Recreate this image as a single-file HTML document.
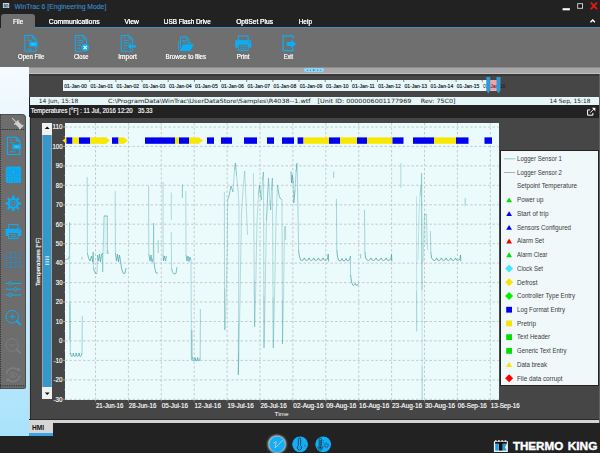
<!DOCTYPE html>
<html><head><meta charset="utf-8">
<style>
*{margin:0;padding:0;box-sizing:border-box}
html,body{width:600px;height:453px;overflow:hidden;background:#222;font-family:"Liberation Sans",sans-serif;color:#fff}
.a{position:absolute}
</style></head><body>
<!-- title bar -->
<div class="a" style="left:0;top:0;width:600px;height:28px;background:#222"></div>
<!-- menu -->
<div class="a" style="left:1px;top:14px;width:34px;height:14px;background:#6f6f6f;border-radius:3px 3px 0 0"></div>
<div class="a" style="left:35px;top:26.7px;width:565px;height:1.4px;background:#4790bd"></div>
<!-- ribbon -->
<div class="a" style="left:0;top:28px;width:600px;height:39.3px;background:#6f6f6f"></div>
<!-- strip -->
<div class="a" style="left:29px;top:67px;width:571px;height:6px;background:#a8a8a8;border-top:0.6px solid #8c8c8c"></div>
<div class="a" style="left:29px;top:72.6px;width:571px;height:1.2px;background:#c0c0c0"></div>
<div class="a" style="left:304.2px;top:67.9px;width:19.8px;height:4.6px;background:#8dd6f7;border-radius:2.3px"></div>
<!-- left column -->
<div class="a" style="left:0;top:67.3px;width:29.3px;height:368.4px;background:linear-gradient(180deg,#f5fbff 0%,#a9e2fb 100%)"></div>
<!-- timeline area -->
<div class="a" style="left:29.3px;top:73.8px;width:571px;height:23.2px;background:#464646;border-top:2.2px solid #383838"></div>
<div class="a" style="left:63.3px;top:80px;width:434px;height:10.8px;background:#e8f8fa"></div>
<!-- info bar -->
<div class="a" style="left:30px;top:97px;width:569px;height:7.8px;background:#e6f6f8"></div>
<!-- header bar -->
<div class="a" style="left:30px;top:104.8px;width:570px;height:13px;background:#222"></div>
<!-- chart panel -->
<div class="a" style="left:29.2px;top:117.6px;width:571px;height:302.8px;background:#2a2a2a"></div><div class="a" style="left:30.6px;top:117.6px;width:570px;height:301.7px;background:#464646"></div>
<div class="a" style="left:29.2px;top:420.4px;width:571px;height:2.6px;background:#d4d4d4"></div>
<div class="a" id="plot" style="left:64.8px;top:123px;width:433.8px;height:276.7px;background:#ebfafb"></div>
<!-- scrollbar -->
<div class="a" style="left:42.4px;top:123px;width:9.8px;height:276.2px;background:#3399cc;border-left:0.7px solid #a0a0a0;border-right:0.7px solid #a0a0a0"></div>
<div class="a" style="left:42.1px;top:123px;width:10.3px;height:11.7px;background:#f0f0f0"></div>
<div class="a" style="left:42.1px;top:387.2px;width:10.3px;height:12px;background:#f0f0f0"></div>
<div class="a" style="left:598.9px;top:73.8px;width:1.1px;height:349px;background:#606060"></div>
<svg class="a" style="left:0;top:0" width="600" height="453" viewBox="0 0 600 453">
<path d="M65 127.0H498.6M65 146.4H498.6M65 165.9H498.6M65 185.3H498.6M65 204.8H498.6M65 224.2H498.6M65 243.7H498.6M65 263.1H498.6M65 282.6H498.6M65 302.0H498.6M65 321.5H498.6M65 340.9H498.6M65 360.4H498.6M65 379.9H498.6M65 399.3H498.6M95.5 123V399.6M128.4 123V399.6M161.3 123V399.6M194.2 123V399.6M227.1 123V399.6M260.0 123V399.6M292.9 123V399.6M325.8 123V399.6M358.7 123V399.6M391.6 123V399.6M424.5 123V399.6M457.4 123V399.6M490.3 123V399.6" stroke="#b8bcbc" stroke-width="0.75" stroke-dasharray="2.5 2" fill="none"/>
<path d="M63 127.0H65M63 146.4H65M63 165.9H65M63 185.3H65M63 204.8H65M63 224.2H65M63 243.7H65M63 263.1H65M63 282.6H65M63 302.0H65M63 321.5H65M63 340.9H65M63 360.4H65M63 379.9H65M63 399.3H65M63.8 127.0H64.8M63.8 136.7H64.8M63.8 146.4H64.8M63.8 156.2H64.8M63.8 165.9H64.8M63.8 175.6H64.8M63.8 185.3H64.8M63.8 195.1H64.8M63.8 204.8H64.8M63.8 214.5H64.8M63.8 224.2H64.8M63.8 234.0H64.8M63.8 243.7H64.8M63.8 253.4H64.8M63.8 263.1H64.8M63.8 272.9H64.8M63.8 282.6H64.8M63.8 292.3H64.8M63.8 302.0H64.8M63.8 311.8H64.8M63.8 321.5H64.8M63.8 331.2H64.8M63.8 340.9H64.8M63.8 350.7H64.8M63.8 360.4H64.8M63.8 370.1H64.8M63.8 379.9H64.8M63.8 389.6H64.8M95.5 399.6V401.5M128.4 399.6V401.5M161.3 399.6V401.5M194.2 399.6V401.5M227.1 399.6V401.5M260.0 399.6V401.5M292.9 399.6V401.5M325.8 399.6V401.5M358.7 399.6V401.5M391.6 399.6V401.5M424.5 399.6V401.5M457.4 399.6V401.5M490.3 399.6V401.5" stroke="#ccc" stroke-opacity="0.7" stroke-width="0.7" fill="none"/>
<path d="M65.0 259.5 L68.5 259.0 L69.3 256.0" stroke="#4aa5aa" stroke-opacity="0.66" stroke-width="0.9" fill="none" stroke-linejoin="round"/>
<path d="M69.3 256.0 L69.6 222.0 L69.9 340.0" stroke="#4aa5aa" stroke-opacity="0.39" stroke-width="0.9" fill="none" stroke-linejoin="round"/>
<path d="M69.8 304.6 L69.9 340.0" stroke="#4aa5aa" stroke-opacity="0.30" stroke-width="0.9" fill="none" stroke-linejoin="round"/>
<path d="M70.0 302.0 L70.3 354.0" stroke="#4aa5aa" stroke-opacity="0.50" stroke-width="0.9" fill="none" stroke-linejoin="round"/>
<path d="M70.3 354.0 L70.5 353.0 L71.2 356.2 L71.9 356.5 L72.8 355.7 L73.4 353.0 L74.1 356.2 L74.8 356.5 L75.7 355.7 L76.2 353.0 L77.0 356.2 L77.7 356.5 L78.5 355.7 L79.1 353.0 L79.8 356.2 L80.6 356.5 L81.4 355.7 L82.0 353.0" stroke="#4aa5aa" stroke-opacity="0.85" stroke-width="0.9" fill="none" stroke-linejoin="round"/>
<path d="M82.0 353.0 L82.3 316.0" stroke="#4aa5aa" stroke-opacity="0.50" stroke-width="0.9" fill="none" stroke-linejoin="round"/>
<path d="M82.0 257.0 L82.0 259.5" stroke="#4aa5aa" stroke-opacity="0.57" stroke-width="0.9" fill="none" stroke-linejoin="round"/>
<path d="M87.2 177.0 L87.4 253.0" stroke="#4aa5aa" stroke-opacity="0.47" stroke-width="0.9" fill="none" stroke-linejoin="round"/>
<path d="M87.4 253.0 L88.5 258.0 L90.0 261.0 L91.5 256.0 L92.8 262.0 L93.2 252.0" stroke="#4aa5aa" stroke-opacity="0.81" stroke-width="0.9" fill="none" stroke-linejoin="round"/>
<path d="M93.2 252.0 L93.5 268.0" stroke="#4aa5aa" stroke-opacity="0.47" stroke-width="0.9" fill="none" stroke-linejoin="round"/>
<path d="M93.5 268.0 L94.5 272.0 L96.0 274.0 L97.0 273.0" stroke="#4aa5aa" stroke-opacity="0.81" stroke-width="0.9" fill="none" stroke-linejoin="round"/>
<path d="M97.0 273.0 L97.5 255.0" stroke="#4aa5aa" stroke-opacity="0.47" stroke-width="0.9" fill="none" stroke-linejoin="round"/>
<path d="M97.5 255.0 L98.5 261.0 L99.5 254.0 L100.5 262.0 L101.5 255.0 L102.4 253.0" stroke="#4aa5aa" stroke-opacity="0.81" stroke-width="0.9" fill="none" stroke-linejoin="round"/>
<path d="M102.4 253.0 L102.7 272.0 L103.0 255.0 L104.0 216.0" stroke="#4aa5aa" stroke-opacity="0.47" stroke-width="0.9" fill="none" stroke-linejoin="round"/>
<path d="M104.0 216.0 L107.4 216.0" stroke="#4aa5aa" stroke-opacity="0.81" stroke-width="0.9" fill="none" stroke-linejoin="round"/>
<path d="M107.4 216.0 L107.6 250.0" stroke="#4aa5aa" stroke-opacity="0.47" stroke-width="0.9" fill="none" stroke-linejoin="round"/>
<path d="M107.6 250.0 L108.0 254.0" stroke="#4aa5aa" stroke-opacity="0.81" stroke-width="0.9" fill="none" stroke-linejoin="round"/>
<path d="M115.2 191.0 L115.4 253.0" stroke="#4aa5aa" stroke-opacity="0.47" stroke-width="0.9" fill="none" stroke-linejoin="round"/>
<path d="M115.4 253.0 L116.5 261.0 L117.5 254.0 L118.5 262.0 L119.5 255.0 L120.7 262.0 L121.5 268.0 L123.0 273.0 L125.0 273.5 L126.0 268.0" stroke="#4aa5aa" stroke-opacity="0.81" stroke-width="0.9" fill="none" stroke-linejoin="round"/>
<path d="M148.6 186.0 L148.8 254.0" stroke="#4aa5aa" stroke-opacity="0.47" stroke-width="0.9" fill="none" stroke-linejoin="round"/>
<path d="M148.8 254.0 L150.0 261.0 L151.0 255.0 L152.0 262.0 L153.3 258.0" stroke="#4aa5aa" stroke-opacity="0.81" stroke-width="0.9" fill="none" stroke-linejoin="round"/>
<path d="M153.3 258.0 L153.6 223.0 L153.9 262.0" stroke="#4aa5aa" stroke-opacity="0.47" stroke-width="0.9" fill="none" stroke-linejoin="round"/>
<path d="M153.9 262.0 L154.8 268.0 L156.0 273.0 L158.0 273.0" stroke="#4aa5aa" stroke-opacity="0.81" stroke-width="0.9" fill="none" stroke-linejoin="round"/>
<path d="M158.2 240.0 L158.2 253.0" stroke="#4aa5aa" stroke-opacity="0.57" stroke-width="0.9" fill="none" stroke-linejoin="round"/>
<path d="M163.0 182.0 L163.1 255.0" stroke="#4aa5aa" stroke-opacity="0.44" stroke-width="0.9" fill="none" stroke-linejoin="round"/>
<path d="M163.1 255.0 L163.5 261.0 L164.5 256.0 L165.5 261.0 L166.5 256.0" stroke="#4aa5aa" stroke-opacity="0.76" stroke-width="0.9" fill="none" stroke-linejoin="round"/>
<path d="M171.3 192.5 L171.3 220.0" stroke="#4aa5aa" stroke-opacity="0.44" stroke-width="0.9" fill="none" stroke-linejoin="round"/>
<path d="M171.3 232.0 L171.5 268.0" stroke="#4aa5aa" stroke-opacity="0.44" stroke-width="0.9" fill="none" stroke-linejoin="round"/>
<path d="M171.5 268.0 L172.5 272.0 L174.0 274.0 L176.0 273.5 L177.0 267.0" stroke="#4aa5aa" stroke-opacity="0.76" stroke-width="0.9" fill="none" stroke-linejoin="round"/>
<path d="M182.4 184.5 L182.4 198.0" stroke="#4aa5aa" stroke-opacity="0.66" stroke-width="0.9" fill="none" stroke-linejoin="round"/>
<path d="M185.8 191.0 L186.0 255.0" stroke="#4aa5aa" stroke-opacity="0.44" stroke-width="0.9" fill="none" stroke-linejoin="round"/>
<path d="M186.0 255.0 L187.0 261.0 L188.0 256.0 L189.0 261.5 L190.0 257.0 L191.0 260.0" stroke="#4aa5aa" stroke-opacity="0.76" stroke-width="0.9" fill="none" stroke-linejoin="round"/>
<path d="M191.0 260.0 L191.4 360.0" stroke="#4aa5aa" stroke-opacity="0.44" stroke-width="0.9" fill="none" stroke-linejoin="round"/>
<path d="M191.3 330.0 L191.4 360.0" stroke="#4aa5aa" stroke-opacity="0.30" stroke-width="0.9" fill="none" stroke-linejoin="round"/>
<path d="M192.0 330.0 L192.2 358.0" stroke="#4aa5aa" stroke-opacity="0.50" stroke-width="0.9" fill="none" stroke-linejoin="round"/>
<path d="M192.2 358.0 L192.5 357.5 L193.1 360.7 L193.8 361.0 L194.6 360.2 L195.1 357.5 L195.7 360.7 L196.3 361.0 L197.1 360.2 L197.6 357.5 L198.3 360.7 L198.9 361.0 L199.7 360.2 L200.2 357.5" stroke="#4aa5aa" stroke-opacity="0.85" stroke-width="0.9" fill="none" stroke-linejoin="round"/>
<path d="M200.2 357.5 L200.4 309.0" stroke="#4aa5aa" stroke-opacity="0.50" stroke-width="0.9" fill="none" stroke-linejoin="round"/>
<path d="M224.4 192.0 L224.6 330.0" stroke="#4aa5aa" stroke-opacity="0.44" stroke-width="0.9" fill="none" stroke-linejoin="round"/>
<path d="M224.5 288.6 L224.6 330.0" stroke="#4aa5aa" stroke-opacity="0.30" stroke-width="0.9" fill="none" stroke-linejoin="round"/>
<path d="M225.2 330.0 L226.0 300.0 L227.4 246.0 L227.6 200.0" stroke="#4aa5aa" stroke-opacity="0.41" stroke-width="0.9" fill="none" stroke-linejoin="round"/>
<path d="M227.6 200.0 L229.0 196.0 L231.0 186.0 L233.0 192.0" stroke="#4aa5aa" stroke-opacity="0.71" stroke-width="0.9" fill="none" stroke-linejoin="round"/>
<path d="M233.0 192.0 L234.5 170.0" stroke="#4aa5aa" stroke-opacity="0.41" stroke-width="0.9" fill="none" stroke-linejoin="round"/>
<path d="M234.5 170.0 L235.4 163.0 L236.5 175.0" stroke="#4aa5aa" stroke-opacity="0.71" stroke-width="0.9" fill="none" stroke-linejoin="round"/>
<path d="M236.5 175.0 L238.0 190.0 L239.0 205.0 L238.3 374.8 L240.0 300.0 L241.5 213.0 L243.0 190.0 L244.7 171.0 L246.0 200.0 L247.5 235.0" stroke="#4aa5aa" stroke-opacity="0.41" stroke-width="0.9" fill="none" stroke-linejoin="round"/>
<path d="M238.5 323.9 L238.3 374.8" stroke="#4aa5aa" stroke-opacity="0.30" stroke-width="0.9" fill="none" stroke-linejoin="round"/>
<path d="M238.8 352.4 L238.3 374.8" stroke="#4aa5aa" stroke-opacity="0.30" stroke-width="0.9" fill="none" stroke-linejoin="round"/>
<path d="M253.4 173.0 L254.6 327.0 L255.5 300.0 L257.0 221.0 L258.5 195.0" stroke="#4aa5aa" stroke-opacity="0.41" stroke-width="0.9" fill="none" stroke-linejoin="round"/>
<path d="M258.5 195.0 L259.5 185.0 L261.4 200.0" stroke="#4aa5aa" stroke-opacity="0.71" stroke-width="0.9" fill="none" stroke-linejoin="round"/>
<path d="M261.4 200.0 L262.5 180.0" stroke="#4aa5aa" stroke-opacity="0.41" stroke-width="0.9" fill="none" stroke-linejoin="round"/>
<path d="M262.5 180.0 L263.5 172.0" stroke="#4aa5aa" stroke-opacity="0.71" stroke-width="0.9" fill="none" stroke-linejoin="round"/>
<path d="M263.5 172.0 L264.0 348.0 L265.0 300.0 L266.5 220.0" stroke="#4aa5aa" stroke-opacity="0.41" stroke-width="0.9" fill="none" stroke-linejoin="round"/>
<path d="M266.5 220.0 L268.5 178.0" stroke="#4aa5aa" stroke-opacity="0.71" stroke-width="0.9" fill="none" stroke-linejoin="round"/>
<path d="M268.5 178.0 L270.0 200.0" stroke="#4aa5aa" stroke-opacity="0.41" stroke-width="0.9" fill="none" stroke-linejoin="round"/>
<path d="M270.0 200.0 L270.7 210.0" stroke="#4aa5aa" stroke-opacity="0.71" stroke-width="0.9" fill="none" stroke-linejoin="round"/>
<path d="M270.7 210.0 L271.6 190.0" stroke="#4aa5aa" stroke-opacity="0.41" stroke-width="0.9" fill="none" stroke-linejoin="round"/>
<path d="M271.6 190.0 L272.4 178.0" stroke="#4aa5aa" stroke-opacity="0.71" stroke-width="0.9" fill="none" stroke-linejoin="round"/>
<path d="M272.4 178.0 L273.3 348.0 L274.5 300.0 L276.0 220.0 L277.5 185.0" stroke="#4aa5aa" stroke-opacity="0.41" stroke-width="0.9" fill="none" stroke-linejoin="round"/>
<path d="M277.5 185.0 L279.0 195.0 L280.0 198.0 L282.0 200.0" stroke="#4aa5aa" stroke-opacity="0.71" stroke-width="0.9" fill="none" stroke-linejoin="round"/>
<path d="M282.0 200.0 L282.5 344.0 L283.5 300.0 L284.5 226.0" stroke="#4aa5aa" stroke-opacity="0.41" stroke-width="0.9" fill="none" stroke-linejoin="round"/>
<path d="M254.2 280.8 L254.6 327.0" stroke="#4aa5aa" stroke-opacity="0.30" stroke-width="0.9" fill="none" stroke-linejoin="round"/>
<path d="M263.9 295.2 L264.0 348.0" stroke="#4aa5aa" stroke-opacity="0.30" stroke-width="0.9" fill="none" stroke-linejoin="round"/>
<path d="M273.0 297.0 L273.3 348.0" stroke="#4aa5aa" stroke-opacity="0.30" stroke-width="0.9" fill="none" stroke-linejoin="round"/>
<path d="M282.4 300.8 L282.5 344.0" stroke="#4aa5aa" stroke-opacity="0.30" stroke-width="0.9" fill="none" stroke-linejoin="round"/>
<path d="M285.5 226.0 L285.7 240.0" stroke="#4aa5aa" stroke-opacity="0.47" stroke-width="0.9" fill="none" stroke-linejoin="round"/>
<path d="M291.0 171.5 L291.5 183.0 L292.3 175.0 L293.2 183.0" stroke="#4aa5aa" stroke-opacity="0.85" stroke-width="0.9" fill="none" stroke-linejoin="round"/>
<path d="M293.2 183.0 L293.8 203.0" stroke="#4aa5aa" stroke-opacity="0.50" stroke-width="0.9" fill="none" stroke-linejoin="round"/>
<path d="M293.8 203.0 L295.0 190.0" stroke="#4aa5aa" stroke-opacity="0.85" stroke-width="0.9" fill="none" stroke-linejoin="round"/>
<path d="M295.0 190.0 L296.0 172.0" stroke="#4aa5aa" stroke-opacity="0.50" stroke-width="0.9" fill="none" stroke-linejoin="round"/>
<path d="M296.0 172.0 L297.0 163.3" stroke="#4aa5aa" stroke-opacity="0.85" stroke-width="0.9" fill="none" stroke-linejoin="round"/>
<path d="M297.0 163.3 L297.8 200.0 L298.6 250.0" stroke="#4aa5aa" stroke-opacity="0.50" stroke-width="0.9" fill="none" stroke-linejoin="round"/>
<path d="M298.6 250.0 L299.3 256.0 L300.8 260.2 L302.0 260.5 L303.4 259.7 L304.3 257.9 L305.5 260.2 L306.7 260.5 L308.1 259.7 L309.0 257.9 L310.2 260.2 L311.4 260.5 L312.8 259.7 L313.7 257.9 L314.9 260.2 L316.1 260.5 L317.5 259.7 L318.4 257.9 L319.6 260.2 L320.8 260.5 L322.2 259.7 L323.1 257.9 L324.3 260.2 L325.5 260.5 L326.9 259.7 L327.8 257.9 L328.2 254.0 L328.6 261.5" stroke="#4aa5aa" stroke-opacity="0.85" stroke-width="0.9" fill="none" stroke-linejoin="round"/>
<path d="M333.7 171.5 L333.7 178.0" stroke="#4aa5aa" stroke-opacity="0.57" stroke-width="0.9" fill="none" stroke-linejoin="round"/>
<path d="M336.4 199.0 L336.8 250.0" stroke="#4aa5aa" stroke-opacity="0.50" stroke-width="0.9" fill="none" stroke-linejoin="round"/>
<path d="M336.8 250.0 L337.6 257.0 L339.0 260.7 L340.0 261.0 L341.2 260.2 L342.0 258.4 L343.0 260.7 L344.0 261.0 L345.2 260.2 L346.0 258.4 L347.0 260.7 L348.0 261.0 L349.2 260.2 L350.0 258.4 L350.3 256.0" stroke="#4aa5aa" stroke-opacity="0.85" stroke-width="0.9" fill="none" stroke-linejoin="round"/>
<path d="M350.3 256.0 L350.6 275.0" stroke="#4aa5aa" stroke-opacity="0.50" stroke-width="0.9" fill="none" stroke-linejoin="round"/>
<path d="M350.6 275.0 L351.5 282.0 L352.8 285.2 L353.6 285.5 L354.6 284.7 L355.3 283.3 L356.1 285.2 L357.0 285.5 L357.9 284.7 L358.6 283.3" stroke="#4aa5aa" stroke-opacity="0.85" stroke-width="0.9" fill="none" stroke-linejoin="round"/>
<path d="M360.6 254.0 L360.6 258.5" stroke="#4aa5aa" stroke-opacity="0.57" stroke-width="0.9" fill="none" stroke-linejoin="round"/>
<path d="M364.5 209.7 L364.9 252.0" stroke="#4aa5aa" stroke-opacity="0.50" stroke-width="0.9" fill="none" stroke-linejoin="round"/>
<path d="M364.9 252.0 L365.6 258.0 L367.3 260.2 L368.5 260.5 L370.0 259.7 L371.0 257.9 L372.3 260.2 L373.6 260.5 L375.1 259.7 L376.1 257.9 L377.3 260.2 L378.6 260.5 L380.1 259.7 L381.1 257.9 L382.4 260.2 L383.6 260.5 L385.2 259.7 L386.2 257.9 L387.4 260.2 L388.7 260.5 L390.2 259.7 L391.2 257.9 L391.5 254.5 L391.8 261.5" stroke="#4aa5aa" stroke-opacity="0.85" stroke-width="0.9" fill="none" stroke-linejoin="round"/>
<path d="M400.8 163.0 L400.8 188.0" stroke="#4aa5aa" stroke-opacity="0.41" stroke-width="0.9" fill="none" stroke-linejoin="round"/>
<path d="M416.5 196.4 L416.7 331.4" stroke="#4aa5aa" stroke-opacity="0.30" stroke-width="0.9" fill="none" stroke-linejoin="round"/>
<path d="M416.6 290.9 L416.7 331.4" stroke="#4aa5aa" stroke-opacity="0.30" stroke-width="0.9" fill="none" stroke-linejoin="round"/>
<path d="M418.0 260.0 L419.0 215.0 L420.0 196.0" stroke="#4aa5aa" stroke-opacity="0.33" stroke-width="0.9" fill="none" stroke-linejoin="round"/>
<path d="M420.0 196.0 L421.0 185.0" stroke="#4aa5aa" stroke-opacity="0.57" stroke-width="0.9" fill="none" stroke-linejoin="round"/>
<path d="M421.5 173.0 L422.0 290.0" stroke="#4aa5aa" stroke-opacity="0.55" stroke-width="1.2" fill="none" stroke-linejoin="round"/>
<path d="M422.0 290.0 L422.2 399.0" stroke="#4aa5aa" stroke-opacity="0.30" stroke-width="0.9" fill="none" stroke-linejoin="round"/>
<path d="M422.1 366.3 L422.2 399.0" stroke="#4aa5aa" stroke-opacity="0.30" stroke-width="0.9" fill="none" stroke-linejoin="round"/>
<path d="M423.0 262.0 L424.0 230.0 L424.5 214.6" stroke="#4aa5aa" stroke-opacity="0.39" stroke-width="0.9" fill="none" stroke-linejoin="round"/>
<path d="M424.5 214.6 L426.5 214.6" stroke="#4aa5aa" stroke-opacity="0.66" stroke-width="0.9" fill="none" stroke-linejoin="round"/>
<path d="M426.5 214.6 L427.0 235.0 L427.6 250.0" stroke="#4aa5aa" stroke-opacity="0.39" stroke-width="0.9" fill="none" stroke-linejoin="round"/>
<path d="M430.4 231.0 L430.8 252.0" stroke="#4aa5aa" stroke-opacity="0.50" stroke-width="0.9" fill="none" stroke-linejoin="round"/>
<path d="M430.8 252.0 L431.6 258.0 L433.2 260.2 L434.4 260.5 L435.8 259.7 L436.7 257.9 L437.9 260.2 L439.1 260.5 L440.5 259.7 L441.4 257.9 L442.6 260.2 L443.8 260.5 L445.2 259.7 L446.1 257.9 L447.3 260.2 L448.5 260.5 L449.9 259.7 L450.8 257.9 L452.0 260.2 L453.2 260.5 L454.6 259.7 L455.5 257.9 L456.7 260.2 L457.9 260.5 L459.3 259.7 L460.2 257.9 L460.5 255.0 L460.8 261.5" stroke="#4aa5aa" stroke-opacity="0.85" stroke-width="0.9" fill="none" stroke-linejoin="round"/>
<path d="M465.2 198.0 L465.2 205.7" stroke="#4aa5aa" stroke-opacity="0.57" stroke-width="0.9" fill="none" stroke-linejoin="round"/>
<rect x="104" y="216" width="3.5" height="38" fill="#4aa5aa" fill-opacity="0.1"/><rect x="424.5" y="214.6" width="2" height="30" fill="#4aa5aa" fill-opacity="0.1"/>
<rect x="66" y="137.4" width="6.5" height="6.4" fill="#0000f0"/>
<rect x="72.5" y="137.4" width="6.5" height="6.4" fill="#f8e800"/>
<rect x="79" y="137.4" width="11.0" height="6.4" fill="#0000f0"/>
<rect x="90" y="137.4" width="15.0" height="6.4" fill="#f8e800"/>
<rect x="112" y="137.4" width="6.5" height="6.4" fill="#0000f0"/>
<rect x="118.5" y="137.4" width="5.5" height="6.4" fill="#f8e800"/>
<rect x="145" y="137.4" width="30.0" height="6.4" fill="#0000f0"/>
<rect x="175" y="137.4" width="4.0" height="6.4" fill="#f8e800"/>
<rect x="179" y="137.4" width="10.0" height="6.4" fill="#0000f0"/>
<rect x="189" y="137.4" width="10.0" height="6.4" fill="#f8e800"/>
<rect x="207" y="137.4" width="7.0" height="6.4" fill="#0000f0"/>
<rect x="221" y="137.4" width="11.0" height="6.4" fill="#0000f0"/>
<rect x="244" y="137.4" width="13.0" height="6.4" fill="#0000f0"/>
<rect x="267" y="137.4" width="7.0" height="6.4" fill="#0000f0"/>
<rect x="282" y="137.4" width="12.0" height="6.4" fill="#0000f0"/>
<rect x="297.6" y="137.4" width="5.9" height="6.4" fill="#0000f0"/>
<rect x="303.5" y="137.4" width="25.5" height="6.4" fill="#f8e800"/>
<rect x="329" y="137.4" width="11.0" height="6.4" fill="#0000f0"/>
<rect x="340" y="137.4" width="17.0" height="6.4" fill="#f8e800"/>
<rect x="357" y="137.4" width="10.0" height="6.4" fill="#0000f0"/>
<rect x="367" y="137.4" width="25.5" height="6.4" fill="#f8e800"/>
<rect x="392.5" y="137.4" width="11.0" height="6.4" fill="#0000f0"/>
<rect x="413" y="137.4" width="21.0" height="6.4" fill="#0000f0"/>
<rect x="434" y="137.4" width="22.0" height="6.4" fill="#f8e800"/>
<rect x="456" y="137.4" width="12.5" height="6.4" fill="#0000f0"/>
<rect x="484.5" y="137.4" width="7.5" height="6.4" fill="#0000f0"/>
<path d="M66.5 137.4L62.5 140.60000000000002L66.5 143.8Z" fill="#f8e800"/>
<path d="M101.5 137.4L105.5 140.60000000000002L101.5 143.8Z" fill="#f8e800"/>
<path d="M106 137.4L110 140.60000000000002L106 143.8Z" fill="#f8e800"/>
<rect x="101" y="137.4" width="5.5" height="6.4" fill="#f8e800"/>
<path d="M124 137.4L128 140.60000000000002L124 143.8Z" fill="#f8e800"/>
<path d="M199 137.4L203 140.60000000000002L199 143.8Z" fill="#f8e800"/>
</svg>
<!-- sidebar -->
<div class="a" style="left:0;top:114.2px;width:25.9px;height:275px;background:#6d6d6d;border-radius:0 4px 2.5px 0;border:0.9px solid #4e4e4e;border-left:none"></div><div class="a" style="left:29px;top:117px;width:0.6px;height:302px;background:#eefaff;opacity:.8"></div>
<!-- legend -->
<div class="a" style="left:499.6px;top:149.7px;width:99px;height:236.8px;background:#f0f8f9;border:1.9px solid #242424"></div>
<!-- bottom -->
<div class="a" style="left:29.2px;top:420.4px;width:23.8px;height:12.8px;background:#d6d6d6"></div>
<div class="a" style="left:29.2px;top:433.2px;width:23.8px;height:2.5px;background:#3aa5e6"></div>
<svg class="a" style="left:0;top:0" width="600" height="453" viewBox="0 0 600 453">
<rect x="2.9" y="3.1" width="6.3" height="4.9" fill="#e8e8e8"/><rect x="3.8" y="4.4" width="4.5" height="2.9" fill="#222"/><rect x="3.9" y="4.9" width="1.3" height="2.3" fill="#1d9ee6"/><rect x="6.9" y="4.9" width="1.4" height="2.3" fill="#3db4f2"/><rect x="5.7" y="4.4" width="0.8" height="2.9" fill="#e8e8e8"/>
<rect x="562.6" y="8.2" width="7.3" height="2.1" fill="#fff"/>
<rect x="577.7" y="3.7" width="4.8" height="4.6" fill="#111" stroke="#cfcfcf" stroke-width="1"/>
<path d="M590.8 2.5L597 9.2M597 2.5L590.8 9.2" stroke="#f01414" stroke-width="1.8"/>
<path d="M590.5 22.3L592.7 20L594.9 22.3" stroke="#fff" stroke-width="1.4" fill="none"/>
<path d="M24.8 35.5H32.7L36.0 38.8V51.3H24.8Z M32.7 35.5V38.8H36.0" fill="none" stroke="#0aaef6" stroke-width="1.0" stroke-linejoin="round"/>
<path d="M27 37.8H29.2M27 40.3H32M27 49.2H32" stroke="#0aaef6" stroke-width="0.9" fill="none"/>
<rect x="29.2" y="41.7" width="8.4" height="5" fill="#0aaef6"/>
<path d="M31.2 44.2H35.6" stroke="#8fd3f7" stroke-width="0.8" fill="none"/>
<path d="M75.3 35.5H83.2L86.5 38.8V51.3H75.3Z M83.2 35.5V38.8H86.5" fill="none" stroke="#0aaef6" stroke-width="1.0" stroke-linejoin="round"/>
<path d="M77.5 37.8H80M77.5 40.3H83.5M77.5 42.9H83.5M77.5 45.5H81M77.5 48.2H80" stroke="#0aaef6" stroke-width="0.9" fill="none"/>
<circle cx="85.2" cy="47.6" r="4.7" fill="#6f6f6f"/><circle cx="85.2" cy="47.6" r="3.8" fill="#0aaef6"/><path d="M83.6 46L86.8 49.2M86.8 46L83.6 49.2" stroke="#fff" stroke-width="1.1"/>
<path d="M121.2 35.5H129.1L132.4 38.8V51.3H121.2Z M129.1 35.5V38.8H132.4" fill="none" stroke="#0aaef6" stroke-width="1.0" stroke-linejoin="round"/>
<path d="M123.5 37.8H126M123.5 40.3H129.5M123.5 42.9H129.5M123.5 45.5H127M123.5 48.2H126.5" stroke="#0aaef6" stroke-width="0.9" fill="none"/>
<path d="M127.2 46.3L131.6 42.3V44.7H136V47.9H131.6V50.3Z" fill="#0aaef6" stroke="#6f6f6f" stroke-width="0.6"/>
<path d="M180.5 41V36.6H186.3L188.7 39V44.3 M186.3 36.6V39H188.7" fill="none" stroke="#0aaef6" stroke-width="0.9" stroke-linejoin="round"/>
<path d="M182 38.2H184.5M182 40.5H187.5M182 42.2H187.5" stroke="#0aaef6" stroke-width="0.8" fill="none"/>
<path d="M180.5 50.6H179.6Q178.6 50.6 178.6 49.6V41.8Q178.6 40.9 179.6 40.9H180.5V48.5" fill="none" stroke="#0aaef6" stroke-width="0.9"/>
<path d="M188.7 42.5H190.5V44.3" fill="none" stroke="#0aaef6" stroke-width="0.8"/>
<path d="M183 44.3H193.9L190.3 50.9H179.6Z" fill="#0aaef6"/>
<g transform="translate(235.2,35.6) scale(1.0)"><rect x="3.1" y="0.4" width="9.8" height="5" fill="none" stroke="#0aaef6" stroke-width="1"/><rect x="0" y="4.6" width="16" height="7.6" rx="0.8" fill="#0aaef6"/><rect x="3.1" y="8.6" width="9.8" height="6.2" fill="#6f6f6f" stroke="#0aaef6" stroke-width="1"/><path d="M5 10.7H11M5 12.7H11" stroke="#0aaef6" stroke-width="0.9"/><rect x="13.4" y="5.9" width="1.2" height="1" fill="#6f6f6f"/></g>
<path d="M293 38.4V35.9H283.1V50.7H293V47.8" fill="none" stroke="#0aaef6" stroke-width="1.2"/>
<path d="M286.8 41.9H291.3V39.5L296.1 43.9L291.3 48.3V46H286.8Z" fill="#0aaef6"/>
<path d="M0 129.5H25 M0 385.8H25" stroke="#262626" stroke-width="0.9" stroke-dasharray="1.3 1"/><path d="M0.4 115V389" stroke="#222" stroke-width="0.8" stroke-dasharray="1.3 1"/>
<g transform="translate(15.9,121.9) rotate(-45)" fill="#d2d2d2"><rect x="-0.45" y="-5.3" width="0.9" height="5.5"/><rect x="-3" y="0" width="6" height="1.4" rx="0.5"/><rect x="-2" y="1.2" width="4" height="6"/><rect x="-2.9" y="6.8" width="5.8" height="1.4" rx="0.5"/></g>
<path d="M7.4 137.3H16.2L19.8 140.9V154.5H7.4Z M16.2 137.3V140.9H19.8" fill="none" stroke="#0aaef6" stroke-width="1.1" stroke-linejoin="round"/>
<path d="M9.8 140H12.5M9.8 142.8H15M9.8 151.8H15.5" stroke="#0aaef6" stroke-width="0.9" fill="none"/>
<rect x="12.4" y="144.3" width="8.6" height="5" fill="#0aaef6"/>
<path d="M14.5 146.8H19" stroke="#8fd3f7" stroke-width="0.8" fill="none"/>
<rect x="5.8" y="166.5" width="15.3" height="16.6" rx="2" fill="#0aaef6"/>
<path d="M6.3 169.6H10.2M6.3 171.6H10.2M6.3 173.6H10.2 M16.8 169.6H20.6M16.8 171.6H20.6M16.8 173.6H20.6 M11.4 169.2H15.6V174.2H11.4Z M6 176.2H21 M8.6 177.2V182.4 M11 177.2V182.4 M13.4 177.2V182.4 M15.8 177.2V182.4 M18.2 177.2V182.4 M12 181.9H15" stroke="#3d7fa6" stroke-opacity="0.55" stroke-width="0.7" fill="none"/>
<g transform="translate(13.25,203.4)">
<rect x="-1.25" y="-7.8" width="2.5" height="4" rx="0.9" fill="#0aaef6" transform="rotate(0)"/>
<rect x="-1.25" y="-7.8" width="2.5" height="4" rx="0.9" fill="#0aaef6" transform="rotate(45)"/>
<rect x="-1.25" y="-7.8" width="2.5" height="4" rx="0.9" fill="#0aaef6" transform="rotate(90)"/>
<rect x="-1.25" y="-7.8" width="2.5" height="4" rx="0.9" fill="#0aaef6" transform="rotate(135)"/>
<rect x="-1.25" y="-7.8" width="2.5" height="4" rx="0.9" fill="#0aaef6" transform="rotate(180)"/>
<rect x="-1.25" y="-7.8" width="2.5" height="4" rx="0.9" fill="#0aaef6" transform="rotate(225)"/>
<rect x="-1.25" y="-7.8" width="2.5" height="4" rx="0.9" fill="#0aaef6" transform="rotate(270)"/>
<rect x="-1.25" y="-7.8" width="2.5" height="4" rx="0.9" fill="#0aaef6" transform="rotate(315)"/>
<circle r="5.5" fill="#0aaef6"/><circle r="3.3" fill="#6f6f6f"/><circle r="2.05" fill="none" stroke="#0aaef6" stroke-width="0.85"/></g>
<g transform="translate(5.6,224.2) scale(0.97)"><rect x="3.1" y="0.4" width="9.8" height="5" fill="none" stroke="#0aaef6" stroke-width="1"/><rect x="0" y="4.6" width="16" height="7.6" rx="0.8" fill="#0aaef6"/><rect x="3.1" y="8.6" width="9.8" height="6.2" fill="#6f6f6f" stroke="#0aaef6" stroke-width="1"/><path d="M5 10.7H11M5 12.7H11" stroke="#0aaef6" stroke-width="0.9"/><rect x="13.4" y="5.9" width="1.2" height="1" fill="#6f6f6f"/></g>
<path d="M5.9 252.6H20.6V267.6H5.9Z M10.8 252.6V267.6 M15.7 252.6V267.6 M5.9 257.6H20.6 M5.9 262.6H20.6" fill="none" stroke="#2a8dc6" stroke-width="0.7"/>
<path d="M5.8 283.5H21 M5.8 289.2H21 M5.8 295H21" stroke="#0aaef6" stroke-width="1"/>
<circle cx="10.2" cy="283.5" r="1.7" fill="#6f6f6f" stroke="#0aaef6" stroke-width="0.9"/>
<circle cx="15.4" cy="289.2" r="1.7" fill="#6f6f6f" stroke="#0aaef6" stroke-width="0.9"/>
<circle cx="10.2" cy="295" r="1.7" fill="#6f6f6f" stroke="#0aaef6" stroke-width="0.9"/>
<circle cx="12.3" cy="316.7" r="6.3" fill="none" stroke="#0aaef6" stroke-width="1"/><path d="M9.3 316.7H15.3M12.3 313.7V319.7" stroke="#0aaef6" stroke-width="0.9"/><path d="M17 321.3L20.3 324.6" stroke="#0aaef6" stroke-width="1.8" stroke-linecap="round"/>
<circle cx="12" cy="345" r="6.3" fill="none" stroke="#7e7e7e" stroke-width="1"/><path d="M9 345H15" stroke="#7e7e7e" stroke-width="0.9"/><path d="M16.7 349.6L20 352.9" stroke="#7e7e7e" stroke-width="1.8" stroke-linecap="round"/>
<path d="M6.5 374A6.8 6.8 0 0 1 18.5 370.5" fill="none" stroke="#7e7e7e" stroke-width="1.6"/><path d="M19.7 375.6A6.8 6.8 0 0 1 7.7 379.1" fill="none" stroke="#7e7e7e" stroke-width="1.6"/><path d="M16.3 370.3L20.3 371.3L19.3 367.5Z M9.9 379.3L5.9 378.3L6.9 382.1Z" fill="#7e7e7e"/><ellipse cx="13.1" cy="374.8" rx="3.6" ry="2.3" fill="none" stroke="#7e7e7e" stroke-width="0.9"/><circle cx="13.1" cy="374.8" r="1" fill="#7e7e7e"/>
<path d="M44.8 128.9L47.25 126.6L49.7 128.9Z" fill="#111"/><path d="M44.8 392.6L47.25 395L49.7 392.6Z" fill="#111"/>
<path d="M45.3 256.8H49.3M45.3 259.3H49.3M45.3 261.8H49.3M45.3 264.3H49.3" stroke="#fff" stroke-width="0.9"/>
<path d="M590.2 109.9H587.6V115.2H592.9V112.9" fill="none" stroke="#fff" stroke-width="1"/><path d="M590.3 112.6L593.8 109.1" fill="none" stroke="#fff" stroke-width="0.9"/><path d="M591.9 107.8H595.3V111.2Z" fill="#fff"/>
<path d="M89.7 80V82M115.8 80V82M142.0 80V82M168.2 80V82M194.4 80V82M220.5 80V82M246.7 80V82M272.9 80V82M299.0 80V82M325.2 80V82M351.4 80V82M377.5 80V82M403.7 80V82M429.9 80V82M456.1 80V82M482.2 80V82" stroke="#555" stroke-width="0.7"/>
<rect x="489.5" y="80" width="8" height="10.8" fill="#f3a0aa"/>
<path d="M307.5 69.6V71M310.4 69.6V71M317.5 69.6V71M320.4 69.6V71" stroke="#2f7fb5" stroke-width="0.8"/><path d="M312.6 69.5H315L313.8 71.3Z" fill="#2a6f9f"/>
<path d="M503.8 158.8H515.2" stroke="#7dbfc2" stroke-width="0.8"/>
<path d="M503.8 172.52H515.2" stroke="#9a9a9a" stroke-width="0.8"/>
<path d="M506.20000000000005 202.26000000000002L509.1 197.46L512.0 202.26000000000002Z" fill="#00e000"/>
<path d="M506.20000000000005 215.98000000000002L509.1 211.18L512.0 215.98000000000002Z" fill="#0000f0"/>
<path d="M506.20000000000005 229.70000000000005L509.1 224.90000000000003L512.0 229.70000000000005Z" fill="#0000f0"/>
<path d="M506.20000000000005 243.42000000000002L509.1 238.62L512.0 243.42000000000002Z" fill="#f00000"/>
<path d="M506.20000000000005 257.14000000000004L509.1 252.34000000000003L512.0 257.14000000000004Z" fill="#00e000"/>
<path d="M505.1 268.56L509.1 264.56L513.1 268.56L509.1 272.56Z" fill="#40e8f8"/>
<path d="M505.1 282.28000000000003L509.1 278.28000000000003L513.1 282.28000000000003L509.1 286.28000000000003Z" fill="#f8e400"/>
<path d="M505.1 296.0L509.1 292.0L513.1 296.0L509.1 300.0Z" fill="#00f000"/>
<rect x="506.20000000000005" y="306.82000000000005" width="5.8" height="5.8" fill="#0000f0"/>
<rect x="506.20000000000005" y="320.5400000000001" width="5.8" height="5.8" fill="#f8e400"/>
<rect x="506.20000000000005" y="334.26000000000005" width="5.8" height="5.8" fill="#00e000"/>
<rect x="506.20000000000005" y="347.98" width="5.8" height="5.8" fill="#00e000"/>
<path d="M506.20000000000005 366.90000000000003L509.1 362.1L512.0 366.90000000000003Z" fill="#f8e400"/>
<path d="M505.1 378.32000000000005L509.1 374.32000000000005L513.1 378.32000000000005L509.1 382.32000000000005Z" fill="#f80000"/>
<defs><filter id="gl" x="-50%" y="-50%" width="200%" height="200%"><feGaussianBlur stdDeviation="1.2"/></filter></defs>
<circle cx="277" cy="444.2" r="9" fill="#d8eefa" filter="url(#gl)"/>
<circle cx="277.1" cy="444.3" r="7.9" fill="#12aef8"/>
<circle cx="300.1" cy="444.3" r="7.9" fill="#12aef8"/>
<circle cx="323.2" cy="444.3" r="7.9" fill="#12aef8"/>
<path d="M273.3 443.2L276.2 441.5L275 448L283 440" fill="none" stroke="#b9c4ca" stroke-width="1" stroke-linejoin="round"/>
<path d="M298.35 439.2V445.6A2.3 2.3 0 1 0 300.65 445.6V439.2A1.15 1.15 0 0 0 298.35 439.2Z" fill="none" stroke="#17384a" stroke-width="0.8"/><circle cx="299.5" cy="447.6" r="1.1" fill="#0c8fd0"/>
<path d="M302.3 440.3V442.6" stroke="#5f8ea8" stroke-width="0.8"/><path d="M304 444.2L306.6 445.7L304 447.2Z" fill="#4f7f98"/>
<path d="M319.15000000000003 439.2V445.6A2.3 2.3 0 1 0 321.45 445.6V439.2A1.15 1.15 0 0 0 319.15000000000003 439.2Z" fill="none" stroke="#17384a" stroke-width="0.8"/><path d="M320.3 440V447" stroke="#17384a" stroke-width="0.7"/><circle cx="320.3" cy="447.6" r="1.2" fill="#17384a"/>
<path d="M322.4 440.4H323.6M322.4 442.4H323.6" stroke="#17384a" stroke-width="0.6"/>
<circle cx="326.2" cy="445.3" r="1.5" fill="none" stroke="#175a86" stroke-width="0.8"/><circle cx="326.2" cy="445.3" r="2.5" fill="none" stroke="#175a86" stroke-width="0.9" stroke-dasharray="0.95 1.01"/>
<path d="M493.9 441.3H495V440.2H496.6V441.3H498V440.2H499.9V441.3H501.3V440.2H503.2V441.3H504.6V440.2H506.3V441.3H507.9V452H493.9Z" fill="#f2f2f2"/>
<rect x="495.1" y="442" width="11.7" height="8.7" fill="#f2f2f2"/>
<rect x="495.1" y="441.9" width="11.7" height="1.9" fill="#111"/><rect x="499" y="441.9" width="3.7" height="8.7" fill="#111"/>
<rect x="495.2" y="443.9" width="3.6" height="6.7" fill="#1d9ee6"/><path d="M502.9 443.9H506.8L505 447.2L506.8 450.6H502.9Z" fill="#1d9ee6"/>
</svg>
<svg class="a" style="left:0;top:0" width="600" height="453" viewBox="0 0 600 453">
<defs><filter id="halo" x="-10%" y="-40%" width="120%" height="180%"><feGaussianBlur in="SourceAlpha" stdDeviation="0.45" result="b"/><feComponentTransfer in="b" result="s"><feFuncA type="linear" slope="1.1"/></feComponentTransfer><feMerge><feMergeNode in="s"/><feMergeNode in="SourceGraphic"/></feMerge></filter></defs>
<text x="14.6" y="8.6" font-size="7.5" fill="#3a8ccd" font-weight="normal" font-family="Liberation Sans, sans-serif" textLength="91.7" lengthAdjust="spacingAndGlyphs" stroke="#3a8ccd" stroke-width="0.12">WinTrac 6 [Engineering Mode]</text>
<text x="13.0" y="23.9" font-size="7.0" fill="#fff" font-weight="normal" font-family="Liberation Sans, sans-serif" textLength="10.2" lengthAdjust="spacingAndGlyphs" stroke="#fff" stroke-width="0.18" filter="url(#halo)">File</text>
<text x="48.8" y="23.9" font-size="7.0" fill="#fff" font-weight="normal" font-family="Liberation Sans, sans-serif" textLength="50.8" lengthAdjust="spacingAndGlyphs" stroke="#fff" stroke-width="0.18" filter="url(#halo)">Communications</text>
<text x="124.5" y="23.9" font-size="7.0" fill="#fff" font-weight="normal" font-family="Liberation Sans, sans-serif" textLength="14.3" lengthAdjust="spacingAndGlyphs" stroke="#fff" stroke-width="0.18" filter="url(#halo)">View</text>
<text x="163.8" y="23.9" font-size="7.0" fill="#fff" font-weight="normal" font-family="Liberation Sans, sans-serif" textLength="47.0" lengthAdjust="spacingAndGlyphs" stroke="#fff" stroke-width="0.18" filter="url(#halo)">USB Flash Drive</text>
<text x="236.2" y="23.9" font-size="7.0" fill="#fff" font-weight="normal" font-family="Liberation Sans, sans-serif" textLength="36.8" lengthAdjust="spacingAndGlyphs" stroke="#fff" stroke-width="0.18" filter="url(#halo)">OptiSet Plus</text>
<text x="298.7" y="23.9" font-size="7.0" fill="#fff" font-weight="normal" font-family="Liberation Sans, sans-serif" textLength="13.3" lengthAdjust="spacingAndGlyphs" stroke="#fff" stroke-width="0.18" filter="url(#halo)">Help</text>
<text x="18.0" y="58.8" font-size="6.8" fill="#fff" font-weight="normal" font-family="Liberation Sans, sans-serif" textLength="26.3" lengthAdjust="spacingAndGlyphs" stroke="#fff" stroke-width="0.18" filter="url(#halo)">Open File</text>
<text x="74.0" y="58.8" font-size="6.8" fill="#fff" font-weight="normal" font-family="Liberation Sans, sans-serif" textLength="14.5" lengthAdjust="spacingAndGlyphs" stroke="#fff" stroke-width="0.18" filter="url(#halo)">Close</text>
<text x="118.3" y="58.8" font-size="6.8" fill="#fff" font-weight="normal" font-family="Liberation Sans, sans-serif" textLength="18.5" lengthAdjust="spacingAndGlyphs" stroke="#fff" stroke-width="0.18" filter="url(#halo)">Import</text>
<text x="165.6" y="58.8" font-size="6.8" fill="#fff" font-weight="normal" font-family="Liberation Sans, sans-serif" textLength="40.6" lengthAdjust="spacingAndGlyphs" stroke="#fff" stroke-width="0.18" filter="url(#halo)">Browse to files</text>
<text x="236.7" y="58.8" font-size="6.8" fill="#fff" font-weight="normal" font-family="Liberation Sans, sans-serif" textLength="12.9" lengthAdjust="spacingAndGlyphs" stroke="#fff" stroke-width="0.18" filter="url(#halo)">Print</text>
<text x="283.8" y="58.8" font-size="6.8" fill="#fff" font-weight="normal" font-family="Liberation Sans, sans-serif" textLength="9.4" lengthAdjust="spacingAndGlyphs" stroke="#fff" stroke-width="0.18" filter="url(#halo)">Exit</text>
<text x="64.2" y="88.0" font-size="5.5" fill="#0c1216" font-weight="normal" font-family="Liberation Sans, sans-serif" textLength="22.6" lengthAdjust="spacingAndGlyphs" stroke="#0c1216" stroke-width="0.15">01-Jan-00</text>
<text x="90.4" y="88.0" font-size="5.5" fill="#0c1216" font-weight="normal" font-family="Liberation Sans, sans-serif" textLength="22.6" lengthAdjust="spacingAndGlyphs" stroke="#0c1216" stroke-width="0.15">01-Jan-01</text>
<text x="116.5" y="88.0" font-size="5.5" fill="#0c1216" font-weight="normal" font-family="Liberation Sans, sans-serif" textLength="22.6" lengthAdjust="spacingAndGlyphs" stroke="#0c1216" stroke-width="0.15">01-Jan-02</text>
<text x="142.7" y="88.0" font-size="5.5" fill="#0c1216" font-weight="normal" font-family="Liberation Sans, sans-serif" textLength="22.6" lengthAdjust="spacingAndGlyphs" stroke="#0c1216" stroke-width="0.15">01-Jan-03</text>
<text x="168.9" y="88.0" font-size="5.5" fill="#0c1216" font-weight="normal" font-family="Liberation Sans, sans-serif" textLength="22.6" lengthAdjust="spacingAndGlyphs" stroke="#0c1216" stroke-width="0.15">01-Jan-04</text>
<text x="195.1" y="88.0" font-size="5.5" fill="#0c1216" font-weight="normal" font-family="Liberation Sans, sans-serif" textLength="22.6" lengthAdjust="spacingAndGlyphs" stroke="#0c1216" stroke-width="0.15">01-Jan-05</text>
<text x="221.2" y="88.0" font-size="5.5" fill="#0c1216" font-weight="normal" font-family="Liberation Sans, sans-serif" textLength="22.6" lengthAdjust="spacingAndGlyphs" stroke="#0c1216" stroke-width="0.15">01-Jan-06</text>
<text x="247.4" y="88.0" font-size="5.5" fill="#0c1216" font-weight="normal" font-family="Liberation Sans, sans-serif" textLength="22.6" lengthAdjust="spacingAndGlyphs" stroke="#0c1216" stroke-width="0.15">01-Jan-07</text>
<text x="273.6" y="88.0" font-size="5.5" fill="#0c1216" font-weight="normal" font-family="Liberation Sans, sans-serif" textLength="22.6" lengthAdjust="spacingAndGlyphs" stroke="#0c1216" stroke-width="0.15">01-Jan-08</text>
<text x="299.7" y="88.0" font-size="5.5" fill="#0c1216" font-weight="normal" font-family="Liberation Sans, sans-serif" textLength="22.6" lengthAdjust="spacingAndGlyphs" stroke="#0c1216" stroke-width="0.15">01-Jan-09</text>
<text x="325.9" y="88.0" font-size="5.5" fill="#0c1216" font-weight="normal" font-family="Liberation Sans, sans-serif" textLength="22.6" lengthAdjust="spacingAndGlyphs" stroke="#0c1216" stroke-width="0.15">01-Jan-10</text>
<text x="352.1" y="88.0" font-size="5.5" fill="#0c1216" font-weight="normal" font-family="Liberation Sans, sans-serif" textLength="22.6" lengthAdjust="spacingAndGlyphs" stroke="#0c1216" stroke-width="0.15">01-Jan-11</text>
<text x="378.2" y="88.0" font-size="5.5" fill="#0c1216" font-weight="normal" font-family="Liberation Sans, sans-serif" textLength="22.6" lengthAdjust="spacingAndGlyphs" stroke="#0c1216" stroke-width="0.15">01-Jan-12</text>
<text x="404.4" y="88.0" font-size="5.5" fill="#0c1216" font-weight="normal" font-family="Liberation Sans, sans-serif" textLength="22.6" lengthAdjust="spacingAndGlyphs" stroke="#0c1216" stroke-width="0.15">01-Jan-13</text>
<text x="430.6" y="88.0" font-size="5.5" fill="#0c1216" font-weight="normal" font-family="Liberation Sans, sans-serif" textLength="22.6" lengthAdjust="spacingAndGlyphs" stroke="#0c1216" stroke-width="0.15">01-Jan-14</text>
<text x="456.8" y="88.0" font-size="5.5" fill="#0c1216" font-weight="normal" font-family="Liberation Sans, sans-serif" textLength="22.6" lengthAdjust="spacingAndGlyphs" stroke="#0c1216" stroke-width="0.15">01-Jan-15</text>
<text x="482.9" y="88.0" font-size="5.4" fill="#1a1a1a" font-weight="normal" font-family="Liberation Sans, sans-serif" textLength="22.6" lengthAdjust="spacingAndGlyphs">01-Jan-16</text>
<text x="38.8" y="102.8" font-size="5.8" fill="#222" font-weight="normal" font-family="DejaVu Sans, sans-serif" textLength="39.4" lengthAdjust="spacingAndGlyphs">14 Jun, 15:18</text>
<text x="108.0" y="102.8" font-size="5.8" fill="#222" font-weight="normal" font-family="DejaVu Sans, sans-serif" textLength="202.6" lengthAdjust="spacingAndGlyphs">C:\ProgramData\WinTrac\UserDataStore\Samples\R4038--1.wtf</text>
<text x="317.6" y="102.8" font-size="5.8" fill="#222" font-weight="normal" font-family="DejaVu Sans, sans-serif" textLength="93.7" lengthAdjust="spacingAndGlyphs">[Unit ID: 0000006001177969</text>
<text x="420.8" y="102.8" font-size="5.8" fill="#222" font-weight="normal" font-family="DejaVu Sans, sans-serif" textLength="34.8" lengthAdjust="spacingAndGlyphs">Rev: 75C0]</text>
<text x="549.5" y="102.8" font-size="5.8" fill="#222" font-weight="normal" font-family="DejaVu Sans, sans-serif" textLength="41.0" lengthAdjust="spacingAndGlyphs">14 Sep, 15:18</text>
<text x="30.7" y="113.3" font-size="6.4" fill="#fff" font-weight="normal" font-family="Liberation Sans, sans-serif" textLength="101.9" lengthAdjust="spacingAndGlyphs" stroke="#fff" stroke-width="0.15">Temperatures [°F] : 11 Jul, 2016 12:20</text>
<text x="138.0" y="113.3" font-size="6.4" fill="#fff" font-weight="normal" font-family="Liberation Sans, sans-serif" textLength="14.4" lengthAdjust="spacingAndGlyphs" stroke="#fff" stroke-width="0.15">35.33</text>
<text x="52.5" y="129.3" font-size="6.5" fill="#fff" font-weight="normal" font-family="Liberation Sans, sans-serif" textLength="10.0" lengthAdjust="spacingAndGlyphs" stroke="#fff" stroke-width="0.15">110</text>
<text x="52.5" y="148.8" font-size="6.5" fill="#fff" font-weight="normal" font-family="Liberation Sans, sans-serif" textLength="10.0" lengthAdjust="spacingAndGlyphs" stroke="#fff" stroke-width="0.15">100</text>
<text x="55.8" y="168.2" font-size="6.5" fill="#fff" font-weight="normal" font-family="Liberation Sans, sans-serif" textLength="6.7" lengthAdjust="spacingAndGlyphs" stroke="#fff" stroke-width="0.15">90</text>
<text x="55.8" y="187.7" font-size="6.5" fill="#fff" font-weight="normal" font-family="Liberation Sans, sans-serif" textLength="6.7" lengthAdjust="spacingAndGlyphs" stroke="#fff" stroke-width="0.15">80</text>
<text x="55.8" y="207.1" font-size="6.5" fill="#fff" font-weight="normal" font-family="Liberation Sans, sans-serif" textLength="6.7" lengthAdjust="spacingAndGlyphs" stroke="#fff" stroke-width="0.15">70</text>
<text x="55.8" y="226.6" font-size="6.5" fill="#fff" font-weight="normal" font-family="Liberation Sans, sans-serif" textLength="6.7" lengthAdjust="spacingAndGlyphs" stroke="#fff" stroke-width="0.15">60</text>
<text x="55.8" y="246.0" font-size="6.5" fill="#fff" font-weight="normal" font-family="Liberation Sans, sans-serif" textLength="6.7" lengthAdjust="spacingAndGlyphs" stroke="#fff" stroke-width="0.15">50</text>
<text x="55.8" y="265.4" font-size="6.5" fill="#fff" font-weight="normal" font-family="Liberation Sans, sans-serif" textLength="6.7" lengthAdjust="spacingAndGlyphs" stroke="#fff" stroke-width="0.15">40</text>
<text x="55.8" y="284.9" font-size="6.5" fill="#fff" font-weight="normal" font-family="Liberation Sans, sans-serif" textLength="6.7" lengthAdjust="spacingAndGlyphs" stroke="#fff" stroke-width="0.15">30</text>
<text x="55.8" y="304.3" font-size="6.5" fill="#fff" font-weight="normal" font-family="Liberation Sans, sans-serif" textLength="6.7" lengthAdjust="spacingAndGlyphs" stroke="#fff" stroke-width="0.15">20</text>
<text x="55.8" y="323.8" font-size="6.5" fill="#fff" font-weight="normal" font-family="Liberation Sans, sans-serif" textLength="6.7" lengthAdjust="spacingAndGlyphs" stroke="#fff" stroke-width="0.15">10</text>
<text x="59.1" y="343.2" font-size="6.5" fill="#fff" font-weight="normal" font-family="Liberation Sans, sans-serif" textLength="3.4" lengthAdjust="spacingAndGlyphs" stroke="#fff" stroke-width="0.15">0</text>
<text x="53.5" y="362.7" font-size="6.5" fill="#fff" font-weight="normal" font-family="Liberation Sans, sans-serif" textLength="9.0" lengthAdjust="spacingAndGlyphs" stroke="#fff" stroke-width="0.15">-10</text>
<text x="53.5" y="382.2" font-size="6.5" fill="#fff" font-weight="normal" font-family="Liberation Sans, sans-serif" textLength="9.0" lengthAdjust="spacingAndGlyphs" stroke="#fff" stroke-width="0.15">-20</text>
<text x="53.5" y="401.6" font-size="6.5" fill="#fff" font-weight="normal" font-family="Liberation Sans, sans-serif" textLength="9.0" lengthAdjust="spacingAndGlyphs" stroke="#fff" stroke-width="0.15">-30</text>
<text x="95.9" y="408.0" font-size="6.6" fill="#fff" font-weight="normal" font-family="Liberation Sans, sans-serif" textLength="27.5" lengthAdjust="spacingAndGlyphs" stroke="#fff" stroke-width="0.15">21-Jun-16</text>
<text x="128.8" y="408.0" font-size="6.6" fill="#fff" font-weight="normal" font-family="Liberation Sans, sans-serif" textLength="27.5" lengthAdjust="spacingAndGlyphs" stroke="#fff" stroke-width="0.15">28-Jun-16</text>
<text x="161.7" y="408.0" font-size="6.6" fill="#fff" font-weight="normal" font-family="Liberation Sans, sans-serif" textLength="26.3" lengthAdjust="spacingAndGlyphs" stroke="#fff" stroke-width="0.15">05-Jul-16</text>
<text x="194.6" y="408.0" font-size="6.6" fill="#fff" font-weight="normal" font-family="Liberation Sans, sans-serif" textLength="26.3" lengthAdjust="spacingAndGlyphs" stroke="#fff" stroke-width="0.15">12-Jul-16</text>
<text x="227.5" y="408.0" font-size="6.6" fill="#fff" font-weight="normal" font-family="Liberation Sans, sans-serif" textLength="26.3" lengthAdjust="spacingAndGlyphs" stroke="#fff" stroke-width="0.15">19-Jul-16</text>
<text x="260.4" y="408.0" font-size="6.6" fill="#fff" font-weight="normal" font-family="Liberation Sans, sans-serif" textLength="26.3" lengthAdjust="spacingAndGlyphs" stroke="#fff" stroke-width="0.15">26-Jul-16</text>
<text x="293.3" y="408.0" font-size="6.6" fill="#fff" font-weight="normal" font-family="Liberation Sans, sans-serif" textLength="30.2" lengthAdjust="spacingAndGlyphs" stroke="#fff" stroke-width="0.15">02-Aug-16</text>
<text x="326.2" y="408.0" font-size="6.6" fill="#fff" font-weight="normal" font-family="Liberation Sans, sans-serif" textLength="30.2" lengthAdjust="spacingAndGlyphs" stroke="#fff" stroke-width="0.15">09-Aug-16</text>
<text x="359.1" y="408.0" font-size="6.6" fill="#fff" font-weight="normal" font-family="Liberation Sans, sans-serif" textLength="30.2" lengthAdjust="spacingAndGlyphs" stroke="#fff" stroke-width="0.15">16-Aug-16</text>
<text x="392.0" y="408.0" font-size="6.6" fill="#fff" font-weight="normal" font-family="Liberation Sans, sans-serif" textLength="30.2" lengthAdjust="spacingAndGlyphs" stroke="#fff" stroke-width="0.15">23-Aug-16</text>
<text x="424.9" y="408.0" font-size="6.6" fill="#fff" font-weight="normal" font-family="Liberation Sans, sans-serif" textLength="30.2" lengthAdjust="spacingAndGlyphs" stroke="#fff" stroke-width="0.15">30-Aug-16</text>
<text x="457.8" y="408.0" font-size="6.6" fill="#fff" font-weight="normal" font-family="Liberation Sans, sans-serif" textLength="29.0" lengthAdjust="spacingAndGlyphs" stroke="#fff" stroke-width="0.15">06-Sep-16</text>
<text x="490.7" y="408.0" font-size="6.6" fill="#fff" font-weight="normal" font-family="Liberation Sans, sans-serif" textLength="29.0" lengthAdjust="spacingAndGlyphs" stroke="#fff" stroke-width="0.15">13-Sep-16</text>
<text x="274.5" y="416.3" font-size="6.0" fill="#fff" font-weight="normal" font-family="Liberation Sans, sans-serif" textLength="14.0" lengthAdjust="spacingAndGlyphs">Time</text>
<g transform="translate(40.3,286) rotate(-90)">
<text x="0.0" y="0.0" font-size="6.2" fill="#fff" font-weight="normal" font-family="Liberation Sans, sans-serif" textLength="48.0" lengthAdjust="spacingAndGlyphs" stroke="#fff" stroke-width="0.15">Temperatures [°F]</text>
</g>
<text x="517.0" y="161.0" font-size="6.3" fill="#3a3a3a" font-weight="normal" font-family="Liberation Sans, sans-serif" textLength="45.0" lengthAdjust="spacingAndGlyphs">Logger Sensor 1</text>
<text x="517.0" y="174.7" font-size="6.3" fill="#3a3a3a" font-weight="normal" font-family="Liberation Sans, sans-serif" textLength="45.0" lengthAdjust="spacingAndGlyphs">Logger Sensor 2</text>
<text x="517.0" y="188.4" font-size="6.3" fill="#3a3a3a" font-weight="normal" font-family="Liberation Sans, sans-serif" textLength="60.0" lengthAdjust="spacingAndGlyphs">Setpoint Temperature</text>
<text x="517.0" y="202.2" font-size="6.3" fill="#3a3a3a" font-weight="normal" font-family="Liberation Sans, sans-serif" textLength="26.5" lengthAdjust="spacingAndGlyphs">Power up</text>
<text x="517.0" y="215.9" font-size="6.3" fill="#3a3a3a" font-weight="normal" font-family="Liberation Sans, sans-serif" textLength="31.5" lengthAdjust="spacingAndGlyphs">Start of trip</text>
<text x="517.0" y="229.6" font-size="6.3" fill="#3a3a3a" font-weight="normal" font-family="Liberation Sans, sans-serif" textLength="54.0" lengthAdjust="spacingAndGlyphs">Sensors Configured</text>
<text x="517.0" y="243.3" font-size="6.3" fill="#3a3a3a" font-weight="normal" font-family="Liberation Sans, sans-serif" textLength="27.0" lengthAdjust="spacingAndGlyphs">Alarm Set</text>
<text x="517.0" y="257.0" font-size="6.3" fill="#3a3a3a" font-weight="normal" font-family="Liberation Sans, sans-serif" textLength="30.5" lengthAdjust="spacingAndGlyphs">Alarm Clear</text>
<text x="517.0" y="270.8" font-size="6.3" fill="#3a3a3a" font-weight="normal" font-family="Liberation Sans, sans-serif" textLength="26.0" lengthAdjust="spacingAndGlyphs">Clock Set</text>
<text x="517.0" y="284.5" font-size="6.3" fill="#3a3a3a" font-weight="normal" font-family="Liberation Sans, sans-serif" textLength="20.5" lengthAdjust="spacingAndGlyphs">Defrost</text>
<text x="517.0" y="298.2" font-size="6.3" fill="#3a3a3a" font-weight="normal" font-family="Liberation Sans, sans-serif" textLength="58.0" lengthAdjust="spacingAndGlyphs">Controller Type Entry</text>
<text x="517.0" y="311.9" font-size="6.3" fill="#3a3a3a" font-weight="normal" font-family="Liberation Sans, sans-serif" textLength="48.0" lengthAdjust="spacingAndGlyphs">Log Format Entry</text>
<text x="517.0" y="325.6" font-size="6.3" fill="#3a3a3a" font-weight="normal" font-family="Liberation Sans, sans-serif" textLength="19.0" lengthAdjust="spacingAndGlyphs">Pretrip</text>
<text x="517.0" y="339.4" font-size="6.3" fill="#3a3a3a" font-weight="normal" font-family="Liberation Sans, sans-serif" textLength="33.0" lengthAdjust="spacingAndGlyphs">Text Header</text>
<text x="517.0" y="353.1" font-size="6.3" fill="#3a3a3a" font-weight="normal" font-family="Liberation Sans, sans-serif" textLength="49.5" lengthAdjust="spacingAndGlyphs">Generic Text Entry</text>
<text x="517.0" y="366.8" font-size="6.3" fill="#3a3a3a" font-weight="normal" font-family="Liberation Sans, sans-serif" textLength="30.0" lengthAdjust="spacingAndGlyphs">Data break</text>
<text x="517.0" y="380.5" font-size="6.3" fill="#3a3a3a" font-weight="normal" font-family="Liberation Sans, sans-serif" textLength="45.5" lengthAdjust="spacingAndGlyphs">File data corrupt</text>
<text x="32.1" y="430.0" font-size="6.4" fill="#111" font-weight="bold" font-family="Liberation Sans, sans-serif" textLength="12.1" lengthAdjust="spacingAndGlyphs">HMI</text>
<text x="512.9" y="450.4" font-size="11.7" fill="#fff" font-weight="bold" font-family="Liberation Sans, sans-serif" textLength="50.3" lengthAdjust="spacingAndGlyphs" stroke="#fff" stroke-width="0.4">THERMO</text>
<text x="567.7" y="450.4" font-size="11.7" fill="#fff" font-weight="bold" font-family="Liberation Sans, sans-serif" textLength="29.7" lengthAdjust="spacingAndGlyphs" stroke="#fff" stroke-width="0.4">KING</text>
<path d="M486.3 77H490.3V90.3L488.3 93.4L486.3 90.3Z" fill="#2b9ad6"/>
<path d="M496.5 77H500.5V90.3L498.5 93.4L496.5 90.3Z" fill="#2b9ad6"/>
</svg>
</body></html>
